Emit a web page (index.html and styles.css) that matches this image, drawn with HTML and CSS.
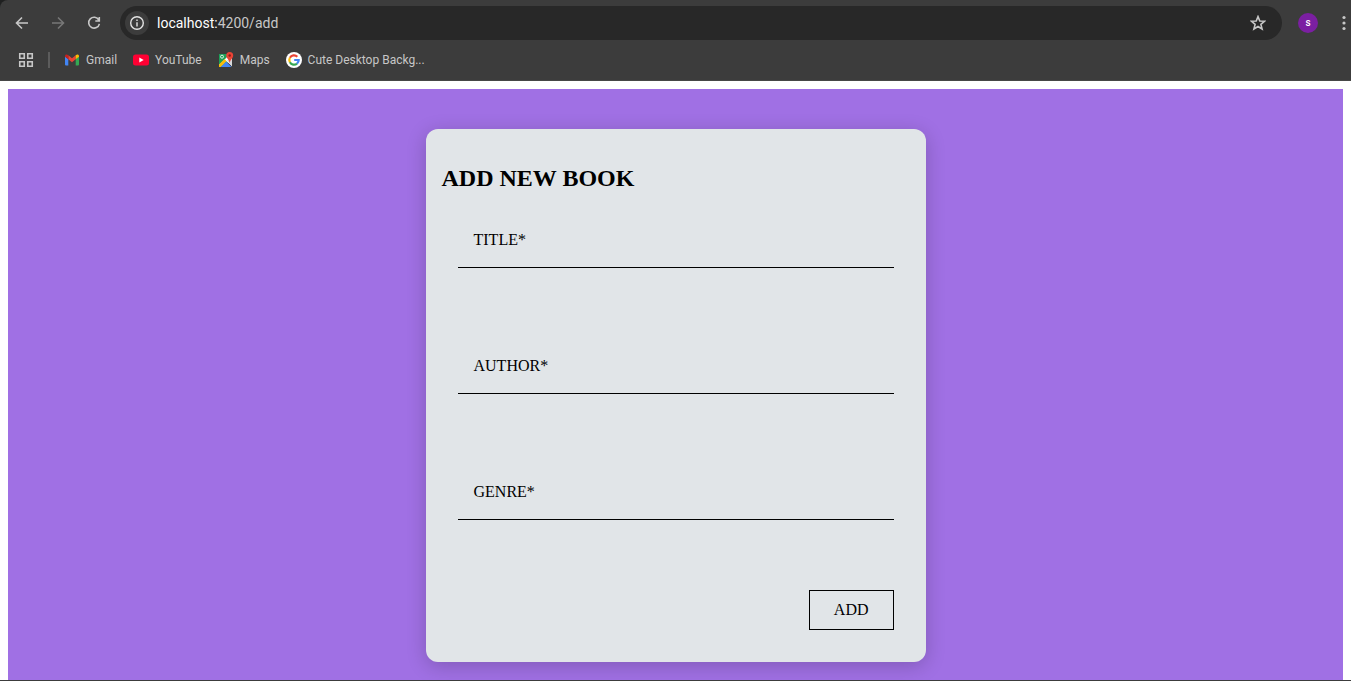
FILE: index.html
```html
<!DOCTYPE html>
<html lang="en">
<head>
<meta charset="utf-8">
<title>Add new book</title>
<link rel="stylesheet" href="styles.css">
</head>
<body>
<header class="browser">
  <div class="toolbar">
    <nav class="nav-buttons" aria-label="Navigation">
      <button class="icon-button" type="button" aria-label="Back">
        <svg class="icon" viewBox="0 0 16 16"><path d="M14 8H3M8 2.500L2.500 8L8 13.500"/></svg>
      </button>
      <button class="icon-button icon-button-off" type="button" aria-label="Forward">
        <svg class="icon" viewBox="0 0 16 16"><path d="M2 8H13M8 2.500L13.500 8L8 13.500"/></svg>
      </button>
      <button class="icon-button" type="button" aria-label="Reload">
        <svg class="icon" viewBox="0 0 16 16"><path d="M12.800 5A5.400 5.400 0 1 0 13.400 8.800M13.300 2V6H9.300"/></svg>
      </button>
    </nav>
    <div class="omnibox">
      <button class="site-info" type="button" aria-label="Site information">
        <svg class="icon icon-thin" viewBox="0 0 16 16"><circle cx="8" cy="8" r="6.300"/><path d="M8 7.200V11.400M8 4.500V6"/></svg>
      </button>
      <span class="address"><span class="host">localhost:</span>4200/add</span>
      <button class="icon-button" type="button" aria-label="Bookmark this page">
        <svg class="icon" viewBox="0 0 16 16"><path d="M8 1.600L9.800 6L14.500 6.300L10.900 9.400L12.100 14L8 11.500L3.900 14L5.100 9.400L1.500 6.300L6.200 6Z"/></svg>
      </button>
    </div>
    <button class="avatar" type="button" aria-label="Profile">s</button>
    <button class="more" type="button" aria-label="Menu">
      <svg class="more-dots" viewBox="0 0 4 16"><circle cx="2" cy="2.500" r="1.600"/><circle cx="2" cy="8" r="1.600"/><circle cx="2" cy="13.500" r="1.600"/></svg>
    </button>
  </div>
  <nav class="bookmarks" aria-label="Bookmarks">
    <button class="icon-button apps" type="button" aria-label="Apps">
      <svg class="icon" viewBox="0 0 16 16"><path d="M1.750 1.750H6.250V6.250H1.750ZM9.750 1.750H14.250V6.250H9.750ZM1.750 9.750H6.250V14.250H1.750ZM9.750 9.750H14.250V14.250H9.750Z"/></svg>
    </button>
    <span class="divider"></span>
    <a class="bookmark" href="#gmail">
      <svg class="favicon" viewBox="0 0 16 16"><path fill="#4285f4" d="M1 4.500L4.300 7V13.500H2A1 1 0 0 1 1 12.500Z"/><path fill="#34a853" d="M11.700 7L15 4.500V12.500A1 1 0 0 1 14 13.500H11.700Z"/><path fill="#ea4335" d="M4.300 3.300L8 6.200L11.700 3.300V7.200L8 10.200L4.300 7.200Z"/><path fill="#c5221f" d="M1 4.200C1 2.500 2.900 2 4.300 3.300V7.200L1 4.800Z"/><path fill="#fbbc04" d="M15 4.200C15 2.500 13.100 2 11.700 3.300V7.200L15 4.800Z"/></svg>
      Gmail</a>
    <a class="bookmark" href="#youtube">
      <svg class="favicon" viewBox="0 0 16 16"><rect x="0" y="2.500" width="16" height="11" rx="2.500" fill="#ff0033"/><path fill="#fff" d="M6.300 5.500L10.700 8L6.300 10.500Z"/></svg>
      YouTube</a>
    <a class="bookmark" href="#maps">
      <svg class="favicon" viewBox="0 0 16 16"><path fill="#1e9e58" d="M1 2H12V9L2 15H1Z"/><path fill="#fff" d="M1 13L12 2L14 4V14L8 9L2 15H1Z"/><path fill="#4285f4" d="M8 9.500L13.500 15H2.500Z"/><path fill="#fbbc04" d="M1 12.500L6.500 7L8.500 9L2.500 15H1Z"/><path fill="#d6d8da" d="M9 8.500L14 6V14.500Z"/><circle cx="4" cy="4.700" r="1.500" fill="none" stroke="#d8f0e2"/><path fill="#ea4335" d="M11.700 0A3.500 3.500 0 0 1 15.200 3.500C15.200 6 12.600 7 11.900 10.500H11.500C10.800 7 8.200 6 8.200 3.500A3.500 3.500 0 0 1 11.700 0Z"/><circle cx="11.700" cy="3.500" r="1.200" fill="#8c1d18"/></svg>
      Maps</a>
    <a class="bookmark" href="#wallpapers">
      <svg class="favicon" viewBox="0 0 16 16"><circle cx="8" cy="8" r="8" fill="#fff"/><g fill="none" stroke-width="2.200"><path stroke="#ea4335" d="M3.900 5.800A4.700 4.700 0 0 1 11.300 4.700"/><path stroke="#fbbc04" d="M3.900 5.800A4.700 4.700 0 0 0 3.900 10.300"/><path stroke="#34a853" d="M3.900 10.300A4.700 4.700 0 0 0 11 11.600"/><path stroke="#4285f4" d="M11 11.600A4.700 4.700 0 0 0 12.700 8H8.200"/></g></svg>
      Cute Desktop Backg...</a>
  </nav>
</header>
<main class="page">
  <form class="card">
    <h2 class="card-title">ADD NEW BOOK</h2>
    <div class="fields">
      <div class="field"><label class="field-label" for="title">TITLE*</label><input class="field-input" id="title" type="text"></div>
      <div class="field"><label class="field-label" for="author">AUTHOR*</label><input class="field-input" id="author" type="text"></div>
      <div class="field"><label class="field-label" for="genre">GENRE*</label><input class="field-input" id="genre" type="text"></div>
    </div>
    <div class="actions"><button class="add-button" type="button">ADD</button></div>
  </form>
</main>
</body>
</html>
```
FILE: styles.css
```css
* { box-sizing: border-box; }

body {
  margin: 0;
  min-height: 100vh;
  display: flex;
  flex-direction: column;
  background: #fff;
  border-bottom: 1px solid #3c3c3c;
  color: #000;
  font-family: "Liberation Serif", "Times New Roman", serif;
}

button { padding: 0; border: 0; background: none; color: inherit; font: inherit; }

/* Browser bar */
.browser {
  background: linear-gradient(#1f2020, #1f2020) left top / 8px 8px no-repeat, #3c3c3c;
  color: #c7c7c7;
  font-family: Roboto, "Noto Sans", sans-serif;
  border-bottom: 1px solid #474747;
}

.toolbar {
  display: flex;
  align-items: center;
  height: 46px;
  padding-left: 12px;
  background: #3c3c3c;
  border-top-left-radius: 8px;
}

.nav-buttons { display: flex; gap: 16px; margin-right: 16px; }

.icon-button { display: grid; place-items: center; width: 20px; height: 20px; }
.icon-button-off { color: #777; }

.icon {
  width: 16px;
  height: 16px;
  fill: none;
  stroke: currentColor;
  stroke-width: 1.6;
}

.icon-thin { stroke-width: 1.4; }

.omnibox {
  flex: 1;
  display: flex;
  align-items: center;
  height: 34px;
  padding: 0 14px 0 5px;
  border-radius: 17px;
  background: #282828;
}

.site-info {
  display: grid;
  place-items: center;
  width: 24px;
  height: 24px;
  border-radius: 50%;
  background: #3c3c3c;
  color: #e3e3e3;
}

.address { flex: 1; padding-left: 8px; font-size: 14px; line-height: 20px; }
.host { color: #fff; }

.avatar {
  width: 20px;
  height: 20px;
  margin-left: 16px;
  border-radius: 50%;
  background: #7b1fa2;
  color: #fff;
  font-size: 10px;
  font-weight: 500;
  line-height: 20px;
}

.more { display: grid; margin: 0 5px 0 24px; }
.more-dots { width: 4px; height: 16px; fill: #c7c7c7; }

.bookmarks {
  display: flex;
  align-items: center;
  height: 34px;
  padding: 0 16px 6px;
  font-size: 12px;
  line-height: 16px;
}

.divider { width: 2px; height: 16px; margin: 0 14px 0 12px; background: #5c5c5c; }

.bookmark {
  display: flex;
  align-items: center;
  gap: 6px;
  margin-right: 16px;
  color: inherit;
  text-decoration: none;
}

.favicon { width: 16px; height: 16px; }

/* Book form */
.page {
  flex: 1;
  margin: 8px 8px 0;
  padding: 40px 16px 18px;
  background: #a070e4;
}

.card {
  max-width: 500px;
  margin: 0 auto;
  padding: 36px 16px 32px;
  border-radius: 12px;
  background: #e1e5e8;
  box-shadow: 0 4px 20px rgba(0, 0, 0, 0.2);
}

.card-title { margin: 0; font-size: 24px; line-height: 27px; }

.fields { display: grid; gap: 70px; padding: 20px 16px 0; }

.field { display: grid; align-items: center; height: 56px; }
.field-label, .field-input { grid-area: 1 / 1; }
.field-label { padding: 0 16px; font-size: 16px; line-height: 24px; }

.field-input {
  width: 100%;
  height: 56px;
  padding: 20px 16px 0;
  border: 0;
  border-bottom: 1px solid #000;
  background: transparent;
  font: inherit;
  font-size: 16px;
}

.actions { display: flex; justify-content: flex-end; padding: 70px 16px 0; }

.add-button {
  padding: 0 24px;
  border: 1px solid #000;
  font-size: 16px;
  line-height: 38px;
}
```
